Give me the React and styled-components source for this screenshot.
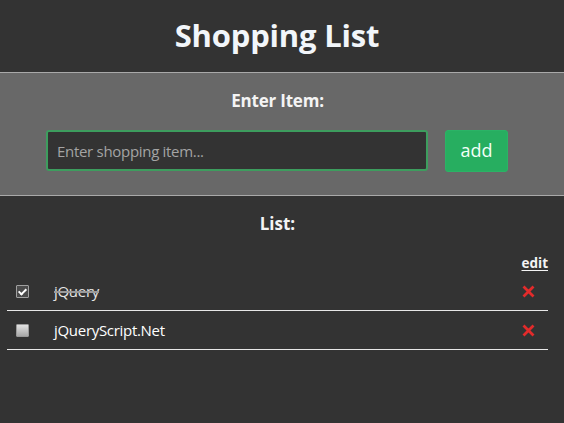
import styled, { createGlobalStyle } from "styled-components";

const GlobalStyle = createGlobalStyle`
  html, body {
    margin: 0;
    padding: 0;
    background: #333333;
    font-family: "Open Sans", "Liberation Sans", sans-serif;
    color: #ffffff;
  }
`

const Page = styled.div`
  width: 564px;
  min-height: 423px;
  background: #333333;
`

const Header = styled.header`
  height: 72px;
  display: flex;
  align-items: center;
  justify-content: center;
  padding-right: 10px;
  box-sizing: border-box;
`

const Title = styled.h1`
  margin: 0;
  font-size: 31px;
  font-weight: 700;
  color: #f2f6fa;
  letter-spacing: -0.2px;
  padding-bottom: 2px;
`

const Panel = styled.section`
  background: #686868;
  border-top: 1px solid #a9a9a9;
  border-bottom: 1px solid #a9a9a9;
  padding: 16px 0 23px;
  display: flex;
  flex-direction: column;
  gap: 17px;
`

const Label = styled.div`
  text-align: center;
  font-size: 17px;
  font-weight: 700;
  line-height: 24px;
  color: #f4f4f4;
  letter-spacing: -0.2px;
  padding-right: 9px;
`

const InputRow = styled.div`
  display: flex;
  gap: 17px;
  padding-left: 46px;
`

const ItemInput = styled.input`
  box-sizing: border-box;
  width: 382px;
  height: 41px;
  background: #333333;
  border: 2px solid #3d9d5e;
  border-radius: 3px;
  padding: 0 9px;
  font-family: "Open Sans", "Liberation Sans", sans-serif;
  font-size: 15px;
  color: #fff;
  outline: none;
  caret-color: #fff;

  &::placeholder {
    color: #a4a4a4;
    letter-spacing: -0.3px;
  }
`

const AddButton = styled.button`
  box-sizing: border-box;
  width: 63px;
  height: 42px;
  background: #27ae60;
  border: 1px solid #2bb366;
  border-radius: 3px;
  color: #f4fff8;
  font-family: "Open Sans", "Liberation Sans", sans-serif;
  font-size: 18px;
  padding: 0 0 2px;
  cursor: pointer;
`

const ListSection = styled.section`
  padding: 16px 0 0 7px;
  width: 541px;
`

const ListTitle = styled.div`
  text-align: center;
  font-size: 17px;
  font-weight: 700;
  line-height: 24px;
  color: #f4f4f4;
  margin-bottom: 18px;
`

const EditLink = styled.a`
  display: block;
  text-align: right;
  font-size: 13.5px;
  font-weight: 700;
  line-height: 18px;
  color: #f4f4f4;
  text-decoration: underline;
  text-underline-offset: 2px;
`

const Row = styled.div`
  height: 38px;
  display: flex;
  align-items: center;
  border-bottom: 1px solid #e8e8e8;
`

const Check = styled.input.attrs({ type: "checkbox" })`
  appearance: none;
  box-sizing: border-box;
  width: 13px;
  height: 13px;
  margin: 0 0 0 9px;
  border: 1px solid #9a9a9a;
  border-radius: 1px;
  background: linear-gradient(#e2e2e2, #a8a8a8);
  position: relative;

  &:checked {
    background: #4b4b4b;
    border-color: #a0a0a0;
  }
  &:checked::after {
    content: "";
    position: absolute;
    left: 3px;
    top: 1px;
    width: 3px;
    height: 6px;
    border: solid #ffffff;
    border-width: 0 2px 2px 0;
    transform: rotate(45deg);
  }
`

const ItemText = styled.span`
  flex: 1;
  margin-left: 25px;
  font-size: 15px;
  letter-spacing: -0.3px;
  color: ${(p) => (p.done ? "#e6e6e6" : "#ffffff")};
  text-decoration: ${(p) => (p.done ? "line-through" : "none")};
  text-decoration-color: #9a9a9a;
  text-decoration-thickness: 2px;
`

const Remove = styled.button`
  background: none;
  border: none;
  padding: 0;
  margin-right: 13px;
  width: 13px;
  height: 13px;
  display: flex;
  cursor: pointer;
`

const CrossIcon = () => (
  <svg width="13" height="13" viewBox="0 0 13 13">
    <path d="M1.5 1.5 L11.5 11.5 M11.5 1.5 L1.5 11.5" stroke="#e32b2b" strokeWidth="2.8" strokeLinecap="butt" />
  </svg>
)

const items = [
  { name: "jQuery", done: true },
  { name: "jQueryScript.Net", done: false },
]

const App = () => {
  return (
    <Page>
      <GlobalStyle />
      <Header>
        <Title>Shopping List</Title>
      </Header>
      <Panel>
        <Label>Enter Item:</Label>
        <InputRow>
          <ItemInput placeholder="Enter shopping item..." />
          <AddButton>add</AddButton>
        </InputRow>
      </Panel>
      <ListSection>
        <ListTitle>List:</ListTitle>
        <EditLink>edit</EditLink>
        {items.map((item) => (
          <Row key={item.name}>
            <Check defaultChecked={item.done} />
            <ItemText done={item.done}>{item.name}</ItemText>
            <Remove>
              <CrossIcon />
            </Remove>
          </Row>
        ))}
      </ListSection>
    </Page>
  )
}

export default App
